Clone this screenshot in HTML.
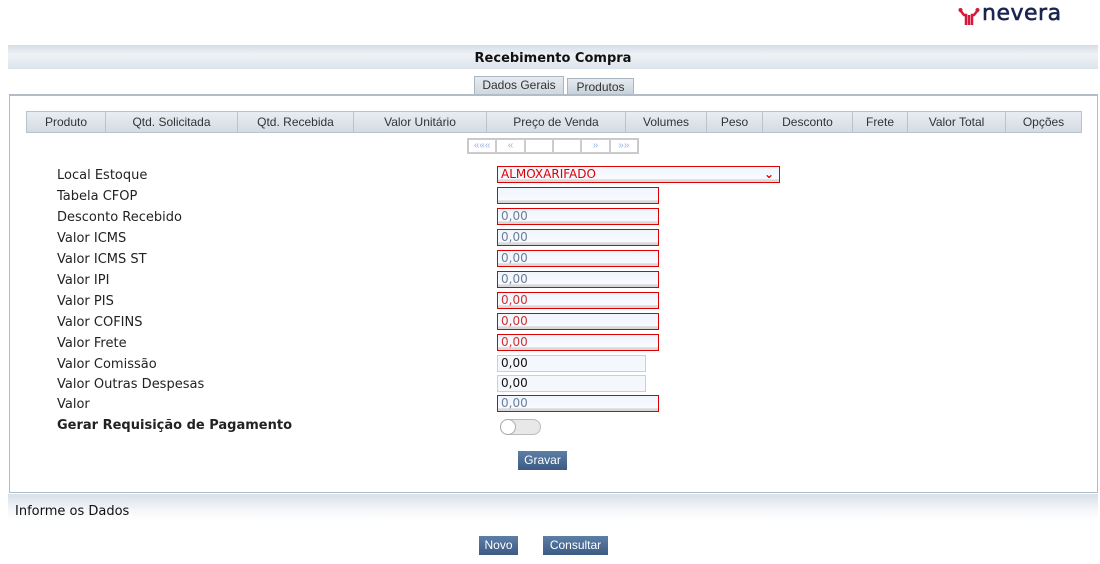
<!DOCTYPE html><html><head><style>
body{margin:0;width:1100px;height:564px;background:#fff;font-family:"DejaVu Sans",Verdana,sans-serif;position:relative;overflow:hidden}
.a{position:absolute}
.bar{background:linear-gradient(#d5dde6,#eef2f6 40%,#dde4ec)}
.lbl{position:absolute;left:57px;font-size:13px;color:#222;line-height:16px}
.inp{position:absolute;left:497px;border:1px solid #d00;background:linear-gradient(#f0f5fc,#f8faff 80%,#d8d8d8 85%);font-size:12px;color:#6a7f99;line-height:15px;padding-left:3px;box-sizing:border-box;width:162px;height:17px}
.th{position:absolute;top:0;height:20px;line-height:20px;text-align:center;font-family:"Liberation Sans",Arial,sans-serif;font-size:12px;color:#333;border-right:1px solid #b9c3cd}
.btn{position:absolute;background:linear-gradient(#5d7ea5,#3b5b85);color:#fff;font-family:"Liberation Sans",Arial,sans-serif;font-size:12px;text-align:center;line-height:19px;height:19px}
</style></head><body>
<div class="a" style="left:958px;top:6px;width:20px;height:20px">
<svg width="22" height="20" viewBox="0 0 22 20"><path d="M2 4 L6 9 L8 9 L8 19 M20 4 L16 9 L14 9 L14 19 M11 9 L11 19" stroke="#d4193a" stroke-width="2.5" fill="none"/><circle cx="2.5" cy="4" r="2" fill="#d4193a"/><circle cx="19.5" cy="4" r="2" fill="#d4193a"/></svg></div>
<div class="a" style="left:982px;top:1px;font-family:'DejaVu Sans',sans-serif;font-size:22px;color:#1b2450;letter-spacing:0.5px;-webkit-text-stroke:0.6px #1b2450">nevera</div>
<div class="a bar" style="left:8px;top:45px;width:1090px;height:24px"></div>
<div class="a" style="left:0;width:1106px;top:51px;text-align:center;font-weight:bold;font-size:13px;color:#111">Recebimento Compra</div>
<div class="a" style="left:474px;top:76px;width:88px;height:17px;border:1px solid #aab6c2;border-bottom:none;background:linear-gradient(#e6ebf0,#d0d8e0);font-family:'Liberation Sans',Arial;font-size:12px;color:#333;text-align:center;line-height:17px">Dados Gerais</div>
<div class="a" style="left:567px;top:78px;width:65px;height:16px;border:1px solid #aab6c2;background:linear-gradient(#e6ebf0,#c6d0da);font-family:'Liberation Sans',Arial;font-size:12px;color:#333;text-align:center;line-height:17px">Produtos</div>
<div class="a" style="left:9px;top:94px;width:1087px;height:396px;border:1px solid #b0bcc8;border-top:2px solid #b0bcc8"></div>
<div class="a" style="left:26px;top:111px;width:1054px;height:20px;border:1px solid #b9c3cd;background:linear-gradient(#e8edf2,#d3dbe3)">
<div class="th" style="left:0;width:78px">Produto</div>
<div class="th" style="left:79px;width:131px">Qtd. Solicitada</div>
<div class="th" style="left:211px;width:115px">Qtd. Recebida</div>
<div class="th" style="left:327px;width:132px">Valor Unitário</div>
<div class="th" style="left:460px;width:138px">Preço de Venda</div>
<div class="th" style="left:599px;width:80px">Volumes</div>
<div class="th" style="left:680px;width:55px">Peso</div>
<div class="th" style="left:736px;width:89px">Desconto</div>
<div class="th" style="left:826px;width:54px">Frete</div>
<div class="th" style="left:881px;width:97px">Valor Total</div>
<div class="th" style="left:979px;width:75px;border:none">Opções</div>
</div>
<div class="a" style="left:467px;top:138px;width:170px;height:14px;border:1px solid #c8c8c8;display:flex;font-size:10px;color:#9bb5e8;font-family:'Liberation Sans'">
<span style="flex:1;border:1px solid #ccc;text-align:center;line-height:12px">«««</span><span style="flex:1;border:1px solid #ccc;text-align:center;line-height:12px">«</span><span style="flex:1;border:1px solid #ccc"></span><span style="flex:1;border:1px solid #ccc"></span><span style="flex:1;border:1px solid #ccc;text-align:center;line-height:12px">»</span><span style="flex:1;border:1px solid #ccc;text-align:center;line-height:12px">»»</span></div>
<div class="lbl" style="top:168px">Local Estoque</div>
<div class="lbl" style="top:189px">Tabela CFOP</div>
<div class="lbl" style="top:210px">Desconto Recebido</div>
<div class="lbl" style="top:231px">Valor ICMS</div>
<div class="lbl" style="top:252px">Valor ICMS ST</div>
<div class="lbl" style="top:273px">Valor IPI</div>
<div class="lbl" style="top:294px">Valor PIS</div>
<div class="lbl" style="top:315px">Valor COFINS</div>
<div class="lbl" style="top:336px">Valor Frete</div>
<div class="lbl" style="top:357px">Valor Comissão</div>
<div class="lbl" style="top:377px">Valor Outras Despesas</div>
<div class="lbl" style="top:397px">Valor</div>
<div class="lbl" style="top:418px;font-weight:bold">Gerar Requisição de Pagamento</div>
<div class="inp" style="top:166px;width:283px;color:#d00">ALMOXARIFADO<span style="position:absolute;right:5px;top:0;font-weight:bold">⌄</span></div>
<div class="inp" style="top:187px"></div>
<div class="inp" style="top:208px">0,00</div>
<div class="inp" style="top:229px">0,00</div>
<div class="inp" style="top:250px">0,00</div>
<div class="inp" style="top:271px">0,00</div>
<div class="inp" style="top:292px;color:#c33">0,00</div>
<div class="inp" style="top:313px;color:#c33">0,00</div>
<div class="inp" style="top:334px;color:#c33">0,00</div>
<div class="inp" style="top:355px;width:149px;border-color:#ccd;background:#f4f7fb;color:#111">0,00</div>
<div class="inp" style="top:375px;width:149px;border-color:#ccd;background:#f4f7fb;color:#111">0,00</div>
<div class="inp" style="top:395px">0,00</div>
<div class="a" style="left:500px;top:419px;width:39px;height:14px;border:1px solid #bbb;border-radius:8px;background:#e8e8e8"></div>
<div class="a" style="left:500px;top:419px;width:14px;height:14px;border:1px solid #aaa;border-radius:8px;background:#fff"></div>
<div class="btn" style="left:518px;top:451px;width:49px">Gravar</div>
<div class="a" style="left:8px;top:494px;width:1090px;height:26px;background:linear-gradient(#d8e0e8,#f4f6f9 60%,#fff)"></div>
<div class="a" style="left:15px;top:504px;font-size:13px;color:#111">Informe os Dados</div>
<div class="btn" style="left:479px;top:536px;width:39px">Novo</div>
<div class="btn" style="left:543px;top:536px;width:65px">Consultar</div>
</body></html>
